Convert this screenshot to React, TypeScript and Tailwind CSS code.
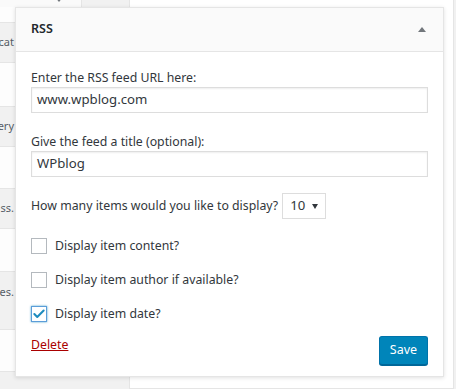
import { Check } from "lucide-react";

const font = { fontFamily: '"Segoe UI", "Noto Sans", "Open Sans", sans-serif' };

function SideRow({ label, tone, h, pt }: { label?: string; tone: "gray" | "white"; h: string; pt?: string }) {
  return (
    <div
      className={`flex justify-end overflow-hidden border-b border-[#e5e5e5] ${h} ${pt ?? "items-center"} ${
        tone === "gray" ? "bg-[#f1f1f1]" : "bg-[#fdfdfd]"
      }`}
    >
      {label && <span className="whitespace-nowrap pr-[115px] text-[11px] text-[#555d66]">{label}</span>}
    </div>
  );
}

function CheckRow({ label, checked }: { label: string; checked?: boolean }) {
  return (
    <div className="flex h-4 items-center gap-2">
      <span
        className={`flex h-4 w-4 items-center justify-center border bg-white ${
          checked ? "border-[#5b9dd9] shadow-[0_0_2px_rgba(30,140,190,0.8)]" : "border-[#b4b9be]"
        }`}
      >
        {checked && <Check className="h-3.5 w-3.5 text-[#1e8cbe]" strokeWidth={3.5} />}
      </span>
      <span className="text-[12.3px] leading-[18px] text-[#32373c]">{label}</span>
    </div>
  );
}

export default function App() {
  return (
    <div className="relative flex h-[389px] w-[456px] overflow-hidden bg-[#f1f1f1]" style={font}>
      {/* available widgets column */}
      <div className="flex w-[129px] flex-col">
        <div className="flex h-[7px]">
          <div className="relative w-[82px] border-r border-[#e5e5e5] bg-[#fafafa]">
            <span className="absolute left-[55px] top-[-3px] h-0 w-0 border-x-[4px] border-t-[5px] border-x-transparent border-t-[#72777c]" />
          </div>
          <div className="flex-1 bg-[#f1f1f1]" />
        </div>
        <SideRow tone="white" h="h-[16px]" />
        <SideRow tone="gray" h="h-[40px]" label="cat" />
        <SideRow tone="white" h="h-[44px]" />
        <SideRow tone="gray" h="h-[40px]" label="ery" />
        <SideRow tone="white" h="h-[42px]" />
        <SideRow tone="gray" h="h-[40px]" label="ss." />
        <SideRow tone="white" h="h-[43px]" />
        <SideRow tone="gray" h="h-[58px]" label="es." pt="items-start pt-[12px]" />
        <SideRow tone="white" h="h-[42px]" />
        <div className="flex-1 bg-[#f1f1f1]" />
      </div>

      {/* sidebar column */}
      <div className="h-[389px] w-[325px] border-x border-b border-[#e5e5e5] bg-white" />

      {/* open widget */}
      <div className="absolute left-[15px] top-[7px] flex h-[370px] w-[429px] flex-col border border-[#e5e5e5] bg-white shadow-[0_1px_4px_rgba(0,0,0,0.12)]">
        <div className="flex h-[44px] shrink-0 items-center justify-between border-b border-[#e5e5e5] bg-[#fafafa] pl-[15px] pr-[17px]">
          <span className="text-[12.5px] font-semibold text-[#23282d]">RSS</span>
          <span className="h-0 w-0 border-x-[4px] border-b-[5px] border-x-transparent border-b-[#72777c]" />
        </div>

        <div className="flex flex-1 flex-col px-[15px] pt-[17px] text-[#32373c]">
          <label className="text-[12.3px] leading-[18px]">Enter the RSS feed URL here:</label>
          <div className="flex h-[26px] items-center border border-[#dddddd] px-[5px] text-[13.2px] text-[#32373c] shadow-[inset_0_1px_2px_rgba(0,0,0,0.07)]">
            www.wpblog.com
          </div>

          <label className="mt-[20px] text-[12.3px] leading-[18px]">Give the feed a title (optional):</label>
          <div className="flex h-[26px] items-center border border-[#dddddd] px-[5px] text-[13.2px] text-[#32373c] shadow-[inset_0_1px_2px_rgba(0,0,0,0.07)]">
            WPblog
          </div>

          <div className="mt-[16px] flex h-[26px] items-center gap-[4px]">
            <span className="text-[12.3px] leading-[18px]">How many items would you like to display?</span>
            <div className="flex h-[26px] w-[44px] items-center justify-between border border-[#dddddd] pl-[7px] pr-[7px] text-[13.2px]">
              <span>10</span>
              <span className="h-0 w-0 border-x-[3.5px] border-t-[5px] border-x-transparent border-t-[#32373c]" />
            </div>
          </div>

          <div className="mt-[19px] flex flex-col gap-[18px]">
            <CheckRow label="Display item content?" />
            <CheckRow label="Display item author if available?" />
            <CheckRow label="Display item date?" checked />
          </div>

          <div className="mt-[14px] flex items-start justify-between">
            <a className="text-[12.3px] leading-[18px] text-[#aa0000] underline">Delete</a>
            <button className="h-[29px] w-[49px] rounded-[3px] border border-[#0073aa] border-b-[#006799] bg-[#0085ba] text-[12.5px] text-white shadow-[0_1px_0_#006799]">
              Save
            </button>
          </div>
        </div>
      </div>
    </div>
  );
}
